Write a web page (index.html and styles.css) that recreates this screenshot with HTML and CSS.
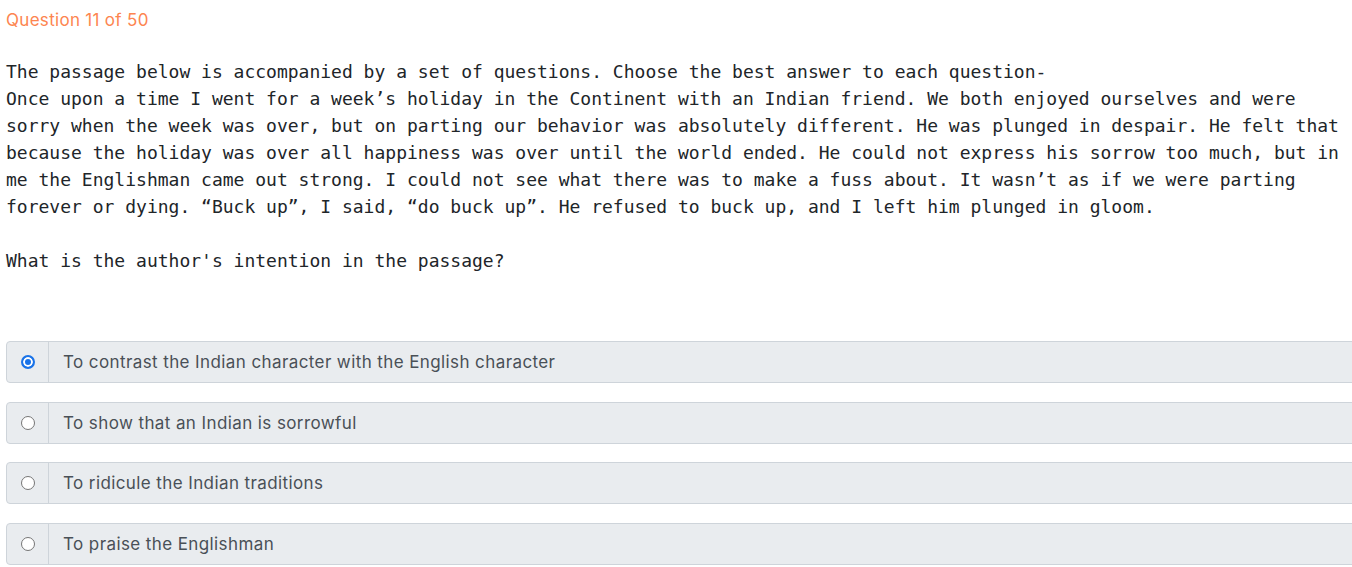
FILE: index.html
```html
<!DOCTYPE html>
<html>
<head>
<meta charset="utf-8">
<link rel="stylesheet" href="styles.css">
</head>
<body>
<div class="page">
  <div class="q-count">Question 11 of 50</div>
  <div class="passage">
    <div class="line">The passage below is accompanied by a set of questions. Choose the best answer to each question-</div>
    <div class="line">Once upon a time I went for a week’s holiday in the Continent with an Indian friend. We both enjoyed ourselves and were</div>
    <div class="line">sorry when the week was over, but on parting our behavior was absolutely different. He was plunged in despair. He felt that</div>
    <div class="line">because the holiday was over all happiness was over until the world ended. He could not express his sorrow too much, but in</div>
    <div class="line">me the Englishman came out strong. I could not see what there was to make a fuss about. It wasn’t as if we were parting</div>
    <div class="line">forever or dying. “Buck up”, I said, “do buck up”. He refused to buck up, and I left him plunged in gloom.</div>
    <div class="line blank"></div>
    <div class="line">What is the author's intention in the passage?</div>
  </div>
  <div class="options">
    <label class="option">
      <span class="opt-radio"><input type="radio" name="ans" checked></span>
      <span class="opt-text">To contrast the Indian character with the English character</span>
    </label>
    <label class="option">
      <span class="opt-radio"><input type="radio" name="ans"></span>
      <span class="opt-text">To show that an Indian is sorrowful</span>
    </label>
    <label class="option">
      <span class="opt-radio"><input type="radio" name="ans"></span>
      <span class="opt-text">To ridicule the Indian traditions</span>
    </label>
    <label class="option">
      <span class="opt-radio"><input type="radio" name="ans"></span>
      <span class="opt-text">To praise the Englishman</span>
    </label>
  </div>
</div>
</body>
</html>
```
FILE: styles.css
```css
html, body {
  margin: 0;
  padding: 0;
  background: #ffffff;
  overflow: hidden;
}
.page {
  padding-left: 6px;
}
.q-count {
  font-family: Inter, "Open Sans", sans-serif;
  font-size: 17px;
  letter-spacing: 0.3px;
  line-height: 24px;
  padding-top: 8px;
  color: #fd8550;
}
.passage {
  margin-top: 25.5px;
  font-family: "DejaVu Sans Mono", monospace;
  font-size: 18px;
  line-height: 27px;
  color: #212529;
  white-space: nowrap;
}
.line.blank {
  height: 27px;
}
.options {
  margin-top: 67.5px;
  margin-right: -40px;
  display: flex;
  flex-direction: column;
  gap: 18.7px;
}
.option {
  display: flex;
  height: 42px;
  box-sizing: border-box;
  border: 1px solid #ced4da;
  border-radius: 4px;
  background: #e9ecef;
  font-family: Inter, "Open Sans", sans-serif;
  font-size: 17px;
  letter-spacing: 0.4px;
  color: #495057;
}
.opt-radio {
  width: 41px;
  border-right: 1px solid #ced4da;
  display: flex;
  align-items: center;
  justify-content: center;
}
.opt-radio input {
  -webkit-appearance: none;
  appearance: none;
  margin: 0;
  width: 14px;
  height: 14px;
  box-sizing: border-box;
  border: 1px solid #767676;
  border-radius: 50%;
  background: #ffffff;
}
.opt-radio input:checked {
  border: 2px solid #1a73e8;
  background: #1a73e8;
  box-shadow: inset 0 0 0 2px #ffffff;
}
.opt-text {
  display: flex;
  align-items: center;
  padding-left: 14px;
}
```
